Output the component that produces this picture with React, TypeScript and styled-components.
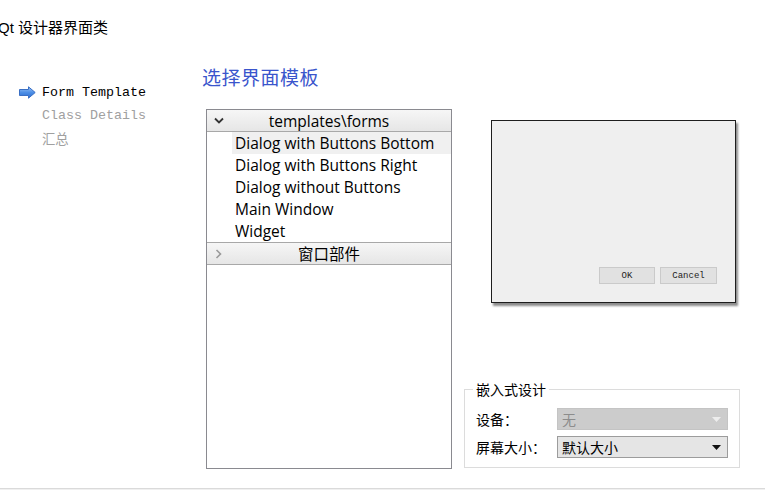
import React from "react";
import styled, { createGlobalStyle } from "styled-components";

const Global = createGlobalStyle`
  html, body { margin: 0; padding: 0; background: #ffffff; }
  body { font-family: "Noto Sans", "Noto Sans CJK SC", sans-serif; }
  * { box-sizing: border-box; }
`;

const Page = styled.div`
  width: 765px;
  height: 490px;
  overflow: hidden;
  display: flex;
  flex-direction: column;
  background: #fff;
`;

const Header = styled.div`
  height: 52px;
  display: flex;
  align-items: center;
  margin-left: -2px;
  font-family: "Liberation Sans", "Noto Sans CJK SC", sans-serif;
  font-size: 15px;
  color: #000;
`;

const Body = styled.div`
  flex: 1;
  display: flex;
  flex-direction: row;
`;

const Sidebar = styled.div`
  width: 202px;
  padding: 29px 0 0 19px;
  display: flex;
  flex-direction: column;
`;

const StepRow = styled.div<{ $active?: boolean }>`
  height: 23px;
  display: flex;
  align-items: center;
  gap: 6px;
  padding-left: ${(p) => (p.$active ? "0" : "23px")};
  font-family: "Liberation Mono", "Noto Sans CJK SC", monospace;
  font-size: 13.33px;
  font-weight: 400;
  color: ${(p) => (p.$active ? "#000" : "#a0a0a0")};
`;

const Center = styled.div`
  width: 249px;
  display: flex;
  flex-direction: column;
`;

const Heading = styled.div`
  margin-top: 12px;
  height: 26px;
  line-height: 26px;
  font-family: "Noto Sans CJK SC", sans-serif;
  font-size: 19px;
  color: #3a55cc;
  letter-spacing: 0.5px;
`;

const Tree = styled.div`
  margin: 19px 0 0 4px;
  width: 246px;
  height: 360px;
  border: 1px solid #8a8a90;
  display: flex;
  flex-direction: column;
  background: #fff;
`;

const Category = styled.div<{ $first?: boolean }>`
  height: ${(p) => (p.$first ? "22px" : "23px")};
  display: flex;
  align-items: center;
  border-top: ${(p) => (p.$first ? "none" : "1px solid #a8a8a8")};
  border-bottom: 1px solid #a8a8a8;
  background: linear-gradient(#f6f6f6, #e6e6e6);
  font-family: "Open Sans", "Noto Sans CJK SC", sans-serif;
  font-size: 15.5px;
  color: #000;
`;

const CatIcon = styled.span`
  width: 20px;
  display: flex;
  align-items: center;
  justify-content: center;
  padding-left: 3px;
`;

const CatLabel = styled.span`
  flex: 1;
  text-align: center;
  padding-right: 20px;
`;

const Item = styled.div<{ $hover?: boolean }>`
  height: 22px;
  margin-left: 25px;
  padding-left: 3px;
  display: flex;
  align-items: center;
  background: ${(p) => (p.$hover ? "#f0f0f0" : "transparent")};
  font-family: "Open Sans", sans-serif;
  font-size: 15.5px;
  color: #000;
  white-space: nowrap;
`;

const Right = styled.div`
  flex: 1;
  display: flex;
  flex-direction: column;
`;

const Preview = styled.div`
  margin: 68px 0 0 40px;
  width: 245px;
  height: 183px;
  border: 1px solid #1e1e1e;
  background: #efefef;
  box-shadow: 2px 3px 2px rgba(0, 0, 0, 0.45);
  display: flex;
  justify-content: flex-end;
  align-items: flex-end;
  gap: 5px;
  padding: 0 18px 18px 0;
`;

const PreviewButton = styled.div<{ $w: number }>`
  width: ${(p) => p.$w}px;
  height: 17px;
  background: #e1e1e1;
  border: 1px solid #cacaca;
  display: flex;
  align-items: center;
  justify-content: center;
  font-family: "Liberation Mono", monospace;
  font-size: 9px;
  color: #222;
`;

const Group = styled.div`
  position: relative;
  margin: 86px 0 0 13px;
  width: 276px;
  height: 79px;
  border: 1px solid #dcdcdc;
  padding: 18px 0 0 11px;
  display: flex;
  flex-direction: column;
  gap: 6px;
`;

const GroupTitle = styled.span`
  position: absolute;
  left: 8px;
  top: -10px;
  padding: 0 3px;
  background: #fff;
  font-family: "Noto Sans CJK SC", sans-serif;
  font-size: 14px;
  line-height: 18px;
  color: #000;
`;

const FieldRow = styled.div`
  height: 22px;
  display: flex;
  align-items: center;
`;

const FieldLabel = styled.span`
  width: 81px;
  font-family: "Noto Sans CJK SC", sans-serif;
  font-size: 14px;
  color: #000;
`;

const Combo = styled.div<{ $disabled?: boolean }>`
  width: 171px;
  height: 22px;
  display: flex;
  align-items: center;
  justify-content: space-between;
  padding: 0 6px 0 4px;
  border: 1px solid ${(p) => (p.$disabled ? "#c4c4c4" : "#9c9c9c")};
  background: ${(p) => (p.$disabled ? "#cccccc" : "#e5e5e5")};
  font-family: "Noto Sans CJK SC", sans-serif;
  font-size: 14px;
  color: ${(p) => (p.$disabled ? "#8c8c8c" : "#000")};
`;

const Footer = styled.div`
  height: 2px;
  border-top: 1px solid #dadada;
  background: #f0f0f0;
`;

const Arrow = () => (
  <svg width="17" height="13" viewBox="0 0 17 13">
    <defs>
      <linearGradient id="ag" x1="0" y1="0" x2="0" y2="1">
        <stop offset="0" stopColor="#9cc4f4" />
        <stop offset="0.5" stopColor="#4d8fe6" />
        <stop offset="1" stopColor="#2a6cd0" />
      </linearGradient>
    </defs>
    <path d="M0.5 3.5 H9.5 V0.8 L16.2 6.5 L9.5 12.2 V9.5 H0.5 Z" fill="url(#ag)" stroke="#3a6fc4" strokeWidth="1" />
  </svg>
);

const ChevronDown = () => (
  <svg width="10" height="7" viewBox="0 0 10 7">
    <path d="M1 1.5 L5 5.5 L9 1.5" fill="none" stroke="#333" strokeWidth="1.8" />
  </svg>
);

const ChevronRight = () => (
  <svg width="7" height="10" viewBox="0 0 7 10">
    <path d="M1.5 1 L5.5 5 L1.5 9" fill="none" stroke="#9a9a9a" strokeWidth="1.6" />
  </svg>
);

const ComboArrow = ({ color }: { color: string }) => (
  <svg width="9" height="5" viewBox="0 0 9 5">
    <path d="M0 0 H9 L4.5 5 Z" fill={color} />
  </svg>
);

const templates = [
  "Dialog with Buttons Bottom",
  "Dialog with Buttons Right",
  "Dialog without Buttons",
  "Main Window",
  "Widget",
];

export default function App() {
  return (
    <>
      <Global />
      <Page>
        <Header>Qt 设计器界面类</Header>
        <Body>
          <Sidebar>
            <StepRow $active>
              <Arrow />
              Form Template
            </StepRow>
            <StepRow>Class Details</StepRow>
            <StepRow>汇总</StepRow>
          </Sidebar>
          <Center>
            <Heading>选择界面模板</Heading>
            <Tree>
              <Category $first>
                <CatIcon>
                  <ChevronDown />
                </CatIcon>
                <CatLabel>templates\forms</CatLabel>
              </Category>
              {templates.map((t, i) => (
                <Item key={t} $hover={i === 0}>
                  {t}
                </Item>
              ))}
              <Category>
                <CatIcon>
                  <ChevronRight />
                </CatIcon>
                <CatLabel>窗口部件</CatLabel>
              </Category>
            </Tree>
          </Center>
          <Right>
            <Preview>
              <PreviewButton $w={56}>OK</PreviewButton>
              <PreviewButton $w={57}>Cancel</PreviewButton>
            </Preview>
            <Group>
              <GroupTitle>嵌入式设计</GroupTitle>
              <FieldRow>
                <FieldLabel>设备：</FieldLabel>
                <Combo $disabled>
                  无
                  <ComboArrow color="#ededed" />
                </Combo>
              </FieldRow>
              <FieldRow>
                <FieldLabel>屏幕大小：</FieldLabel>
                <Combo>
                  默认大小
                  <ComboArrow color="#111" />
                </Combo>
              </FieldRow>
            </Group>
          </Right>
        </Body>
        <Footer />
      </Page>
    </>
  );
}
